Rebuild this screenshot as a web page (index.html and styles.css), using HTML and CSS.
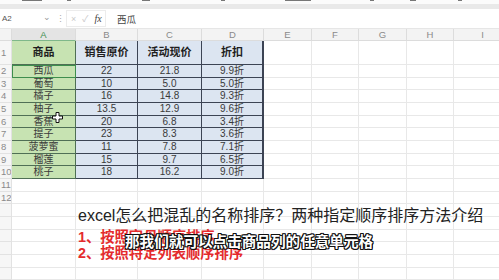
FILE: index.html
```html
<!DOCTYPE html>
<html lang="zh">
<head>
  <meta charset="UTF-8">
  <title>excel 排序</title>
  <link rel="stylesheet" href="styles.css">
</head>
<body>
<div class="screen">
  <div class="toolbar">
    <div class="toolbar-top">
      <span class="tb-mark m1"></span><span class="tb-mark m2"></span><span class="tb-mark m3"></span>
      <span class="tb-mark m4"></span><span class="tb-mark m5"></span><span class="tb-mark m6"></span>
      <span class="tb-mark m7"></span><span class="tb-mark m8"></span>
    </div>
    <div class="toolbar-band"></div>
  </div>

  <div class="formula-bar">
    <div class="name-box">A2 <span class="chev">&#8964;</span></div>
    <div class="sep">&#8942;</div>
    <div class="fx-box">
      <span class="fx-x">&#215;</span>
      <span class="fx-ok">&#10003;</span>
      <span class="fx">fx</span>
    </div>
    <div class="formula">西瓜</div>
  </div>

  <table class="sheet">
    <colgroup>
      <col class="c-rh"><col class="c-a"><col class="c-b"><col class="c-c"><col class="c-d">
      <col class="c-e"><col class="c-f"><col class="c-g"><col class="c-h"><col class="c-i">
    </colgroup>
    <tr class="hdr">
      <td class="corner"></td><td class="col-a">A</td><td>B</td><td>C</td><td>D</td>
      <td>E</td><td>F</td><td>G</td><td>H</td><td>I</td>
    </tr>
    <tr class="r1">
      <td class="rn">1</td>
      <td class="g th">商品</td><td class="b th">销售原价</td><td class="b th">活动现价</td><td class="b th last">折扣</td>
      <td></td><td></td><td></td><td></td><td></td>
    </tr>
    <tr class="r13">
      <td class="rn">2</td>
      <td class="g sel">西瓜</td><td class="b">22</td><td class="b">21.8</td><td class="b last">9.9折</td>
      <td></td><td></td><td></td><td></td><td></td>
    </tr>
    <tr class="r12">
      <td class="rn">3</td>
      <td class="g">葡萄</td><td class="b">10</td><td class="b">5.0</td><td class="b last">5.0折</td>
      <td></td><td></td><td></td><td></td><td></td>
    </tr>
    <tr class="r13">
      <td class="rn">4</td>
      <td class="g">橘子</td><td class="b">16</td><td class="b">14.8</td><td class="b last">9.3折</td>
      <td></td><td></td><td></td><td></td><td></td>
    </tr>
    <tr class="r13">
      <td class="rn">5</td>
      <td class="g">柚子</td><td class="b">13.5</td><td class="b">12.9</td><td class="b last">9.6折</td>
      <td></td><td></td><td></td><td></td><td></td>
    </tr>
    <tr class="r12">
      <td class="rn">6</td>
      <td class="g">香蕉</td><td class="b">20</td><td class="b">6.8</td><td class="b last">3.4折</td>
      <td></td><td></td><td></td><td></td><td></td>
    </tr>
    <tr class="r13">
      <td class="rn">7</td>
      <td class="g">提子</td><td class="b">23</td><td class="b">8.3</td><td class="b last">3.6折</td>
      <td></td><td></td><td></td><td></td><td></td>
    </tr>
    <tr class="r13">
      <td class="rn">8</td>
      <td class="g">菠萝蜜</td><td class="b">11</td><td class="b">7.8</td><td class="b last">7.1折</td>
      <td></td><td></td><td></td><td></td><td></td>
    </tr>
    <tr class="r12">
      <td class="rn">9</td>
      <td class="g">榴莲</td><td class="b">15</td><td class="b">9.7</td><td class="b last">6.5折</td>
      <td></td><td></td><td></td><td></td><td></td>
    </tr>
    <tr class="r13">
      <td class="rn">10</td>
      <td class="g">桃子</td><td class="b">18</td><td class="b">16.2</td><td class="b last">9.0折</td>
      <td></td><td></td><td></td><td></td><td></td>
    </tr>
    <tr class="r13"><td class="rn">11</td><td></td><td></td><td></td><td></td><td></td><td></td><td></td><td></td><td></td></tr>
    <tr class="r12"><td class="rn">12</td><td></td><td></td><td></td><td></td><td></td><td></td><td></td><td></td><td></td></tr>
    <tr class="r13"><td class="rn"></td><td></td><td></td><td></td><td></td><td></td><td></td><td></td><td></td><td></td></tr>
    <tr class="r13"><td class="rn"></td><td></td><td></td><td></td><td></td><td></td><td></td><td></td><td></td><td></td></tr>
    <tr class="r12"><td class="rn"></td><td></td><td></td><td></td><td></td><td></td><td></td><td></td><td></td><td></td></tr>
    <tr class="r13"><td class="rn"></td><td></td><td></td><td></td><td></td><td></td><td></td><td></td><td></td><td></td></tr>
    <tr class="r13"><td class="rn"></td><td></td><td></td><td></td><td></td><td></td><td></td><td></td><td></td><td></td></tr>
    <tr class="r12"><td class="rn"></td><td></td><td></td><td></td><td></td><td></td><td></td><td></td><td></td><td></td></tr>
  </table>

  <!-- mouse cursor over 柚子 -->
  <svg class="cursor" width="11" height="11" viewBox="0 0 11 11">
    <path d="M4 0.5h3v3.5h3.5v3h-3.5v3.5h-3v-3.5h-3.5v-3h3.5z" fill="#fff" stroke="#111" stroke-width="1"/>
  </svg>

  <div class="caption">
    <div class="title">excel怎么把混乱的名称排序？两种指定顺序排序方法介绍</div>
    <div class="steps">
      <div>1、按照字母顺序排序</div>
      <div>2、按照特定列表顺序排序</div>
    </div>
  </div>
  <div class="subtitle">那我们就可以点击商品列的任意单元格</div>
</div>
</body>
</html>
```

FILE: styles.css
```css
body { margin: 0; background: #fff; font-family: "Liberation Sans", "Noto Sans CJK SC", sans-serif; }
.screen { position: relative; width: 499px; height: 280px; overflow: hidden; background: #fff; }

.toolbar { height: 9px; }
.toolbar-top { height: 4px; position: relative; background: #fbfbfb; }
.tb-mark { position: absolute; top: 0; height: 1px; background: #777; }
.m1 { left: 22px; width: 20px; } .m2 { left: 67px; width: 4px; } .m3 { left: 142px; width: 8px; }
.m4 { left: 221px; width: 4px; } .m5 { left: 285px; width: 26px; } .m6 { left: 370px; width: 4px; }
.m7 { left: 410px; width: 6px; } .m8 { left: 458px; width: 4px; }
.toolbar-band { height: 5px; background: #e9e9e9; border-bottom: 1px solid #dedede; }

.formula-bar { height: 19px; display: flex; align-items: center; background: #fff; border-bottom: 1px solid #e6e6e6; color: #555; }
.name-box { width: 55px; padding-left: 2px; box-sizing: border-box; font-size: 8px; display: flex; justify-content: space-between; padding-right: 4px; }
.chev { color: #999; font-size: 9px; line-height: 6px; }
.sep { width: 10px; text-align: center; color: #aaa; font-size: 9px; }
.fx-box { width: 40px; height: 17px; margin-left: 1px; border: 1px solid #ececec; display: flex; align-items: center; gap: 6px; padding-left: 4px; box-sizing: border-box; }
.fx-x, .fx-ok { color: #c9c9c9; font-size: 9px; }
.fx { font-family: "Liberation Serif", serif; font-style: italic; font-size: 10px; color: #444; }
.formula { margin-left: 11px; font-size: 9.5px; color: #444; }

.sheet { border-collapse: separate; border-spacing: 0; table-layout: fixed; width: 512px; }
.c-rh { width: 12px; } .c-a { width: 64px; } .c-b { width: 62px; } .c-c { width: 64px; } .c-d { width: 62px; }
.c-e { width: 48px; } .c-f { width: 47px; } .c-g { width: 48px; } .c-h { width: 47px; } .c-i { width: 58px; }
.sheet td { padding: 0; box-sizing: border-box; border-right: 1px solid #e8e8e8; border-bottom: 1px solid #e8e8e8; text-align: center; font-size: 10px; color: #444; white-space: nowrap; overflow: hidden; line-height: 1; }

.hdr td { height: 12px; background: #f3f3f3; color: #8a8a8a; font-size: 9.5px; border-color: #dcdcdc; }
.hdr .col-a { background: #e4e4e4; color: #3f8f50; border-bottom-color: #7fb88a; }
.r1 td { height: 24px; }
.r13 td { height: 13px; }
.r12 td { height: 12px; }
.sheet .rn { background: #f6f6f6; color: #8a8a8a; font-size: 9.5px; text-align: left; padding-left: 1px; border-color: #e2e2e2; }

.sheet .g { background: #c7e3b2; border-right-color: #4f6f55; border-bottom-color: #4f6f55; color: #3a3a3a; }
.sheet .b { background: #dce5f1; border-right-color: #3c4454; border-bottom-color: #3c4454; color: #3a3a3a; }
.sheet .last { border-right-width: 2px; }
.sheet .th { font-weight: bold; font-size: 11px; color: #1e1e1e; }
.sheet .sel { outline: 1.5px solid #3e8e4e; outline-offset: -1px; }

.cursor { position: absolute; left: 52px; top: 112px; }

.caption { position: absolute; left: 78px; top: 206px; }
.title { font-size: 16px; color: #222; line-height: 20px; white-space: nowrap; }
.steps { margin-top: 3px; color: #e42b2d; font-weight: bold; font-size: 14.3px; line-height: 16px; }
.subtitle { position: absolute; left: 125px; top: 230px; font-size: 14.6px; font-weight: bold; color: #fff; white-space: nowrap;
  text-shadow: -1px -1px 0 #111, 1px -1px 0 #111, -1px 1px 0 #111, 1px 1px 0 #111, 0 1px 0 #111, 0 -1px 0 #111, 1px 0 0 #111, -1px 0 0 #111; }
```
